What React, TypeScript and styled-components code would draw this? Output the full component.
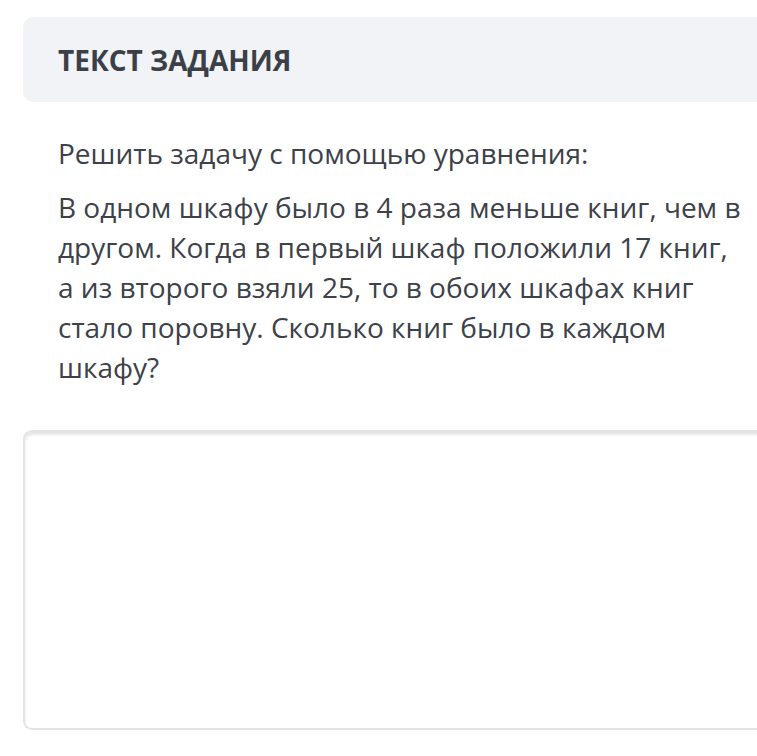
import React from 'react'
import styled, { createGlobalStyle } from 'styled-components'

const Global = createGlobalStyle`
  html, body {
    margin: 0;
    padding: 0;
    background: #fff;
    overflow: hidden;
  }
  body {
    font-family: "Open Sans", "Liberation Sans", sans-serif;
  }
`

const Page = styled.div`
  width: 820px;
  padding: 17px 0 0 23px;
  box-sizing: border-box;
`

const Header = styled.div`
  display: flex;
  align-items: center;
  height: 85px;
  padding: 0 35px;
  background: #f2f3f6;
  border-radius: 10px 0 0 10px;
`

const Title = styled.h2`
  margin: 0;
  font-size: 28px;
  font-weight: 700;
  color: #3b3f48;
`

const Body = styled.div`
  padding: 31px 35px 0;
  color: #3d4149;
`

const Para = styled.p<{ $gap?: number }>`
  margin: 0 0 ${p => p.$gap ?? 0}px;
  font-size: 28px;
  line-height: 40px;
  max-width: 686px;
`

const Answer = styled.div`
  margin-top: 43px;
  height: 296px;
  border: 2px solid #e4e4e4;
  border-right: none;
  border-radius: 9px 0 0 9px;
  box-shadow: inset 0 3px 3px rgba(0, 0, 0, 0.1);
  background: #fff;
`

export default function App() {
  return (
    <>
      <Global />
      <Page>
        <Header>
          <Title>ТЕКСТ ЗАДАНИЯ</Title>
        </Header>
        <Body>
          <Para $gap={14}>Решить задачу с помощью уравнения:</Para>
          <Para>
            В одном шкафу было в 4 раза меньше книг, чем в другом. Когда в первый шкаф положили 17 книг,
            а из второго взяли 25, то в обоих шкафах книг стало поровну. Сколько книг было в каждом шкафу?
          </Para>
        </Body>
        <Answer />
      </Page>
    </>
  )
}
